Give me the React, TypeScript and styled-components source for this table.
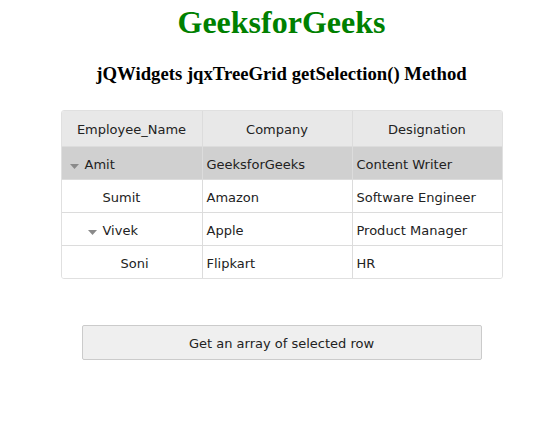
import React from "react";
import styled, { createGlobalStyle } from "styled-components";

const Global = createGlobalStyle`
  html, body { margin: 0; padding: 0; background: #fff; }
  #root { width: 563px; }
`;

const Page = styled.div`
  display: flex;
  flex-direction: column;
  align-items: center;
  padding-top: 4px;
`;

const Title = styled.h1`
  margin: 0;
  font-family: "Liberation Serif", serif;
  font-weight: bold;
  font-size: 32px;
  line-height: 37px;
  color: #008000;
`;

const Subtitle = styled.h3`
  margin: 22px 0 0;
  font-family: "Liberation Serif", serif;
  font-weight: bold;
  font-size: 18.72px;
  line-height: 22px;
  color: #000;
`;

const Grid = styled.div`
  margin-top: 25px;
  width: 440px;
  border: 1px solid #e0e0e0;
  border-radius: 3px;
  overflow: hidden;
  font-family: "DejaVu Sans", Verdana, sans-serif;
  font-size: 13px;
  color: #222;
`;

const Row = styled.div<{ $head?: boolean; $selected?: boolean; $last?: boolean }>`
  display: grid;
  grid-template-columns: 140px 150px 150px;
  height: ${(p) => (p.$head ? 35 : 32)}px;
  background: ${(p) => (p.$head ? "#e8e8e8" : p.$selected ? "#d0d0d0" : "#fff")};
  border-bottom: ${(p) => (p.$last ? "none" : "1px solid #dcdcdc")};
`;

const Cell = styled.div<{ $center?: boolean; $first?: boolean }>`
  display: flex;
  align-items: center;
  justify-content: ${(p) => (p.$center ? "center" : "flex-start")};
  padding-left: ${(p) => (p.$center ? 0 : 4)}px;
  padding-top: 2px;
  border-left: ${(p) => (p.$first ? "none" : "1px solid #dcdcdc")};
  white-space: nowrap;
`;

const NameCell = styled(Cell)<{ $level: number }>`
  padding-left: ${(p) => 8 + p.$level * 18}px;
`;

const Toggle = styled.span`
  display: inline-block;
  width: 14px;
  margin-right: 1px;
  color: #8a8a8a;
`;

const Arrow = () => (
  <svg width="9" height="5" viewBox="0 0 9 5">
    <polygon points="0,0 9,0 4.5,5" fill="#8a8a8a" />
  </svg>
);

const Button = styled.button`
  margin-top: 46px;
  width: 400px;
  height: 35px;
  padding-top: 2px;
  background: #efefef;
  border: 1px solid #cbcbcb;
  border-radius: 2px;
  font-family: "DejaVu Sans", Verdana, sans-serif;
  font-size: 13px;
  color: #222;
`;

type R = { name: string; company: string; job: string; level: number; hasKids: boolean };
const rows: R[] = [
  { name: "Amit", company: "GeeksforGeeks", job: "Content Writer", level: 0, hasKids: true },
  { name: "Sumit", company: "Amazon", job: "Software Engineer", level: 1, hasKids: false },
  { name: "Vivek", company: "Apple", job: "Product Manager", level: 1, hasKids: true },
  { name: "Soni", company: "Flipkart", job: "HR", level: 2, hasKids: false },
];

export default function App() {
  return (
    <>
      <Global />
      <Page>
        <Title>GeeksforGeeks</Title>
        <Subtitle>jQWidgets jqxTreeGrid getSelection() Method</Subtitle>
        <Grid>
          <Row $head>
            <Cell $center $first>Employee_Name</Cell>
            <Cell $center>Company</Cell>
            <Cell $center>Designation</Cell>
          </Row>
          {rows.map((r, i) => (
            <Row key={r.name} $selected={i === 0} $last={i === rows.length - 1}>
              <NameCell $first $level={r.level}>
                <Toggle>{r.hasKids ? <Arrow /> : null}</Toggle>
                {r.name}
              </NameCell>
              <Cell>{r.company}</Cell>
              <Cell>{r.job}</Cell>
            </Row>
          ))}
        </Grid>
        <Button>Get an array of selected row</Button>
      </Page>
    </>
  );
}
